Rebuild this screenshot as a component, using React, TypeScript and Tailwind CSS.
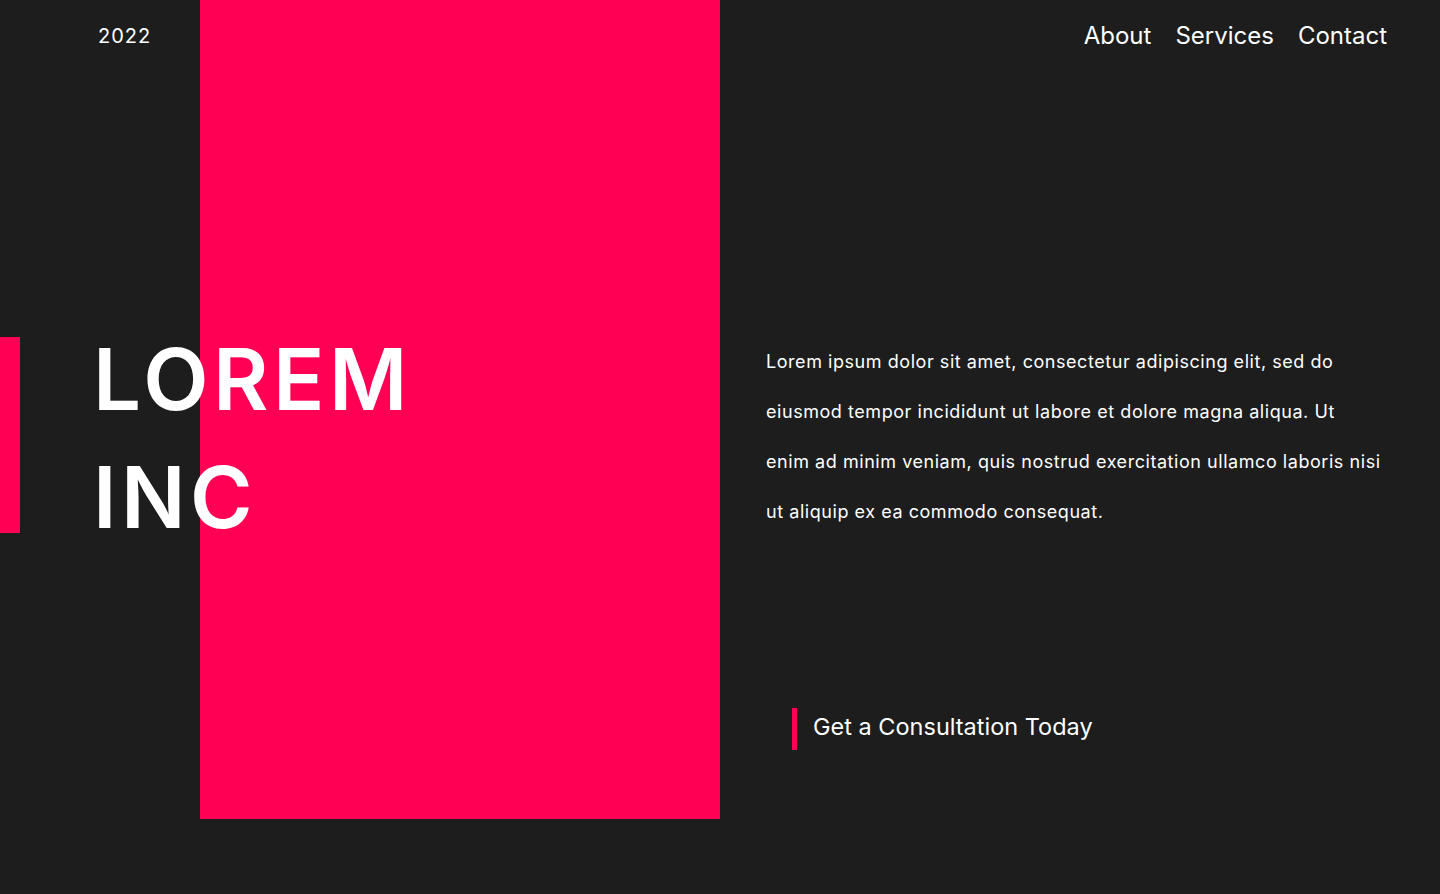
const bodyLines = [
  'Lorem ipsum dolor sit amet, consectetur adipiscing elit, sed do',
  'eiusmod tempor incididunt ut labore et dolore magna aliqua. Ut',
  'enim ad minim veniam, quis nostrud exercitation ullamco laboris nisi',
  'ut aliquip ex ea commodo consequat.',
]

export default function App() {
  return (
    <div className="flex h-[894px] w-full overflow-hidden bg-[#1d1d1d] text-white [font-family:Inter,'Noto_Sans',sans-serif]">
      {/* Left: brand block */}
      <div className="relative w-[720px] shrink-0">
        <div className="ml-[200px] h-[819px] w-[520px] bg-[#ff0055]" />

        <div className="absolute left-[98px] top-[22px] text-[20px] leading-[28px] tracking-[1px]">2022</div>

        <div className="absolute left-0 top-[337px] h-[196px] w-[20px] bg-[#ff0055]" />

        <h1 className="absolute left-[93px] top-[321px] text-[85px] font-semibold leading-[118px] tracking-[4.5px]">
          LOREM
          <br />
          INC
        </h1>
      </div>

      {/* Right: nav + copy */}
      <div className="flex flex-1 flex-col">
        <nav className="flex justify-end gap-[24px] pr-[53px] pt-[20px] text-[24px] leading-[32px]">
          <a href="#">About</a>
          <a href="#">Services</a>
          <a href="#">Contact</a>
        </nav>

        <div className="mt-[285px] pl-[46px] text-[18px] leading-[50px] tracking-[0.55px]">
          {bodyLines.map((line) => (
            <div key={line} className="whitespace-nowrap">
              {line}
            </div>
          ))}
        </div>

        <div className="ml-[72px] mt-[171px] flex items-center gap-[16px]">
          <span className="h-[42px] w-[5px] bg-[#ff0055]" />
          <a href="#" className="-mt-[4px] text-[23.5px] leading-[32px]">
            Get a Consultation Today
          </a>
        </div>
      </div>
    </div>
  )
}
